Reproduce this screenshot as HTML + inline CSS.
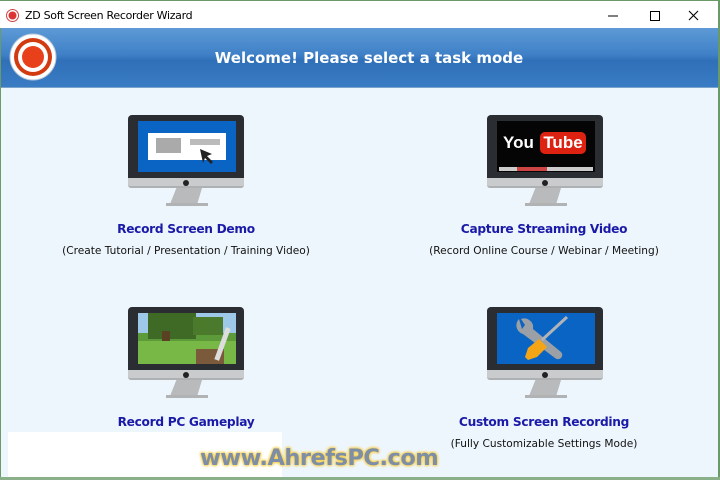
<!DOCTYPE html>
<html><head><meta charset="utf-8"><style>
*{margin:0;padding:0;box-sizing:border-box}
body{width:720px;height:480px;overflow:hidden;background:#eef6fd;font-family:"Liberation Sans",sans-serif;position:relative}
.tb{position:absolute;left:0;top:0;width:720px;height:28px;background:#fff;border-top:1px solid #6a9a6a}
.tb .t{position:absolute;left:25px;top:8px;font-size:11px;color:#000;font-family:"DejaVu Sans",sans-serif;letter-spacing:-0.3px}
.hd{position:absolute;left:0;top:28px;width:720px;height:60px;background:linear-gradient(#5d9ad6,#3f80c7 45%,#2f70b9 55%,#3a7cc4);border-bottom:1px solid #7aa3c9}
.hd .w{position:absolute;left:0;width:720px;top:21px;text-align:center;font-weight:bold;font-size:15px;color:#fff;font-family:"DejaVu Sans",sans-serif;padding-left:18px}
.mon{position:absolute;width:116px;height:92px}
.mon .fr{position:absolute;left:0;top:0;width:116px;height:63px;background:#2a2d31;border-radius:4px 4px 0 0}
.mon .sc{position:absolute;left:10px;top:6px;width:98px;height:51px;overflow:hidden}
.mon .ch{position:absolute;left:0;top:63px;width:116px;height:10px;background:#c9cbcd;border-radius:0 0 3px 3px;border-bottom:2px solid #aeb1b3}
.mon .dot{position:absolute;left:55px;top:65px;width:6px;height:6px;border-radius:50%;background:#222}
.mon .st{position:absolute;left:42px;top:73px;width:32px;height:16px;background:#b8babc;clip-path:polygon(20% 0,100% 0,85% 100%,0 100%)}
.mon .bs{position:absolute;left:38px;top:88px;width:42px;height:3px;background:#b0b2b4}
.lb{position:absolute;width:300px;text-align:center;font-weight:bold;font-size:12.2px;color:#1a1aa8;font-family:"DejaVu Sans",sans-serif;letter-spacing:-0.3px}
.sb{position:absolute;width:320px;text-align:center;font-size:10.6px;color:#111;font-family:"DejaVu Sans",sans-serif}
</style></head><body>
<div class="tb"><svg style="position:absolute;left:6px;top:8px" width="13" height="13"><circle cx="6.5" cy="6.5" r="6" fill="#fff" stroke="#c44" stroke-width="1"/><circle cx="6.5" cy="6.5" r="4" fill="#d33"/></svg><div class="t">ZD Soft Screen Recorder Wizard</div>
<svg style="position:absolute;left:600px;top:8px" width="110" height="14"><line x1="8" y1="7" x2="18" y2="7" stroke="#000"/><rect x="50.5" y="2.5" width="9" height="9" fill="none" stroke="#000"/><path d="M89 2l9 9M98 2l-9 9" stroke="#000" stroke-width="1.1"/></svg></div>
<div class="hd"><svg style="position:absolute;left:8px;top:4px" width="50" height="50"><circle cx="25" cy="25" r="23" fill="#fff" stroke="#b8c8d8"/><circle cx="25" cy="25" r="19" fill="#d23a10"/><circle cx="25" cy="25" r="15" fill="#fff"/><circle cx="25" cy="25" r="11" fill="#e8401a"/></svg><div class="w">Welcome! Please select a task mode</div></div>

<div class="mon" style="left:128px;top:115px"><div class="fr"></div><div class="sc" style="background:#0a64c4"><div style="position:absolute;left:10px;top:12px;width:78px;height:27px;background:#fff"></div><div style="position:absolute;left:18px;top:17px;width:25px;height:15px;background:#aaa"></div><div style="position:absolute;left:52px;top:18px;width:30px;height:6px;background:#bbb"></div><svg style="position:absolute;left:60px;top:26px" width="20" height="20"><path d="M2 2l12 5-5 2 6 6-2 2-6-6-2 5z" fill="#222"/></svg></div><div class="ch"></div><div class="dot"></div><div class="st"></div><div class="bs"></div></div>

<div class="mon" style="left:487px;top:115px"><div class="fr"></div><div class="sc" style="background:#050505"><div style="position:absolute;left:6px;top:12px;color:#fff;font-weight:bold;font-size:17px;font-family:'Liberation Sans',sans-serif">You</div><div style="position:absolute;left:43px;top:11px;width:46px;height:22px;background:#d21;border-radius:5px;color:#fff;font-weight:bold;font-size:17px;text-align:center;line-height:22px">Tube</div><div style="position:absolute;left:2px;top:46px;width:94px;height:4px;background:#ccc"></div><div style="position:absolute;left:20px;top:46px;width:30px;height:4px;background:#c44"></div></div><div class="ch"></div><div class="dot"></div><div class="st"></div><div class="bs"></div></div>

<div class="mon" style="left:128px;top:307px"><div class="fr"></div><div class="sc" style="background:#5d9a3a"><div style="position:absolute;left:0;top:0;width:98px;height:20px;background:#9ec8e8"></div><div style="position:absolute;left:10px;top:0;width:48px;height:26px;background:#3e6a25"></div><div style="position:absolute;left:55px;top:4px;width:30px;height:18px;background:#4b7a2c"></div><div style="position:absolute;left:24px;top:18px;width:8px;height:18px;background:#5a4124"></div><div style="position:absolute;left:0;top:28px;width:98px;height:23px;background:#77b846"></div><div style="position:absolute;left:58px;top:36px;width:28px;height:15px;background:#7a5a3a"></div><div style="position:absolute;left:82px;top:14px;width:5px;height:34px;background:#ddd;transform:rotate(20deg)"></div></div><div class="ch"></div><div class="dot"></div><div class="st"></div><div class="bs"></div></div>

<div class="mon" style="left:487px;top:307px"><div class="fr"></div><div class="sc" style="background:#0a64c4"><svg width="98" height="51"><path d="M22 6a9 9 0 0 0 4 15l32 24a4 4 0 0 0 6-6L36 16a9 9 0 0 0-12-10l4 6-3 4z" fill="#9aa0a6"/><line x1="70" y1="4" x2="45" y2="27" stroke="#b0b4b8" stroke-width="3"/><path d="M42 26l8 8-10 10-9 3-3-3 3-9z" fill="#f3a515"/></svg></div><div class="ch"></div><div class="dot"></div><div class="st"></div><div class="bs"></div></div>

<div class="lb" style="left:36px;top:222px">Record Screen Demo</div>
<div class="sb" style="left:26px;top:245px">(Create Tutorial / Presentation / Training Video)</div>
<div class="lb" style="left:394px;top:222px">Capture Streaming Video</div>
<div class="sb" style="left:384px;top:245px">(Record Online Course / Webinar / Meeting)</div>
<div class="lb" style="left:36px;top:415px">Record PC Gameplay</div>
<div class="lb" style="left:394px;top:415px">Custom Screen Recording</div>
<div class="sb" style="left:384px;top:438px">(Fully Customizable Settings Mode)</div>

<div style="position:absolute;left:8px;top:432px;width:274px;height:46px;background:#fff"></div>
<div style="position:absolute;left:200px;top:445px;font-weight:bold;font-size:22.5px;color:#7d8ea6;font-family:'DejaVu Sans',sans-serif;letter-spacing:-0.5px;text-shadow:0 0 3px #f8d24a,0 0 3px #f8d24a,0 0 2px #e8b830">www.AhrefsPC.com</div>
<div style="position:absolute;left:0;top:28px;width:1px;height:452px;background:#6a9a6a"></div>
<div style="position:absolute;right:0;top:0;width:2px;height:480px;background:#6a9a6a"></div>
<div style="position:absolute;left:0;top:477px;width:720px;height:3px;background:#8ab08a"></div>
</body></html>
